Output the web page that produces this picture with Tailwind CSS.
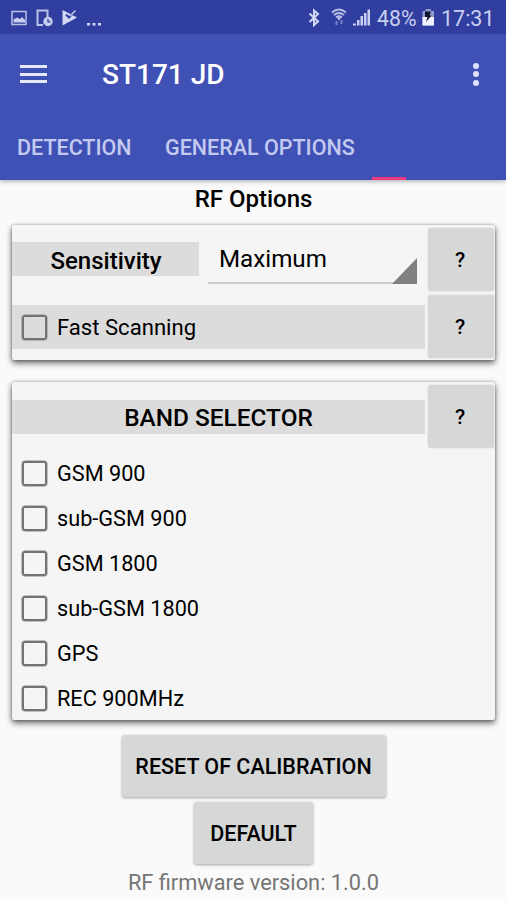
<!DOCTYPE html>
<html lang="en">
<head>
<meta charset="utf-8">
<title>ST171 JD</title>
<script src="https://cdn.jsdelivr.net/npm/@tailwindcss/browser@4"></script>
</head>
<body class="w-[506px] h-[900px] overflow-hidden bg-[#fafafa] font-[Roboto,sans-serif] text-black">
<div class="flex h-[900px] w-[506px] flex-col whitespace-nowrap">
  <div class="relative z-10 flex h-[180px] shrink-0 flex-col bg-[#3f51b5] shadow-[0_1px_5px_rgba(0,0,0,0.35)]">
    <div class="flex h-[34px] items-center bg-[#303f9f] text-[#c9cff0]">
      <svg class="h-[34px] w-[110px]" viewBox="0 0 110 34" fill="none">
        <rect x="12" y="11.500" width="14" height="13" stroke="#b9c0e8" stroke-width="1.500"/>
        <path d="M13.500 22.500v-3l3.500-2 3 1.500 2-2 3 3v2.500z" fill="#c9cff0"/>
        <path d="M43 25h-5.500V10.500h10V17" stroke="#b9c0e8" stroke-width="2"/>
        <circle cx="48" cy="21.500" r="4.700" fill="#c9cff0"/>
        <path d="M48 18.800v3h2.500" stroke="#303f9f" stroke-width="1.300"/>
        <path d="M62.500 10l14.500 7.500L62.500 25.500z" fill="#d3d8f4"/>
        <path d="M66 14.500l3 3 6-6.500" stroke="#303f9f" stroke-width="2"/>
        <path d="M70 16l5.500-5.500" stroke="#d3d8f4" stroke-width="1.300"/>
        <path d="M87 23h3v2.500h-3zM92.500 23h3v2.500h-3zM98 23h3v2.500h-3z" fill="#d3d8f4"/>
      </svg>
      <svg class="ml-[195px] h-[34px] w-[70px]" viewBox="305 0 70 34" fill="none">
        <path d="M309.500 13.500l8.500 8-4 3.500V10.500l4 3.500-8.500 8" stroke="#d3d8f4" stroke-width="2"/>
        <path d="M332 12.500q7-6 14 0M334 15q5-4 10 0M336 17.500q3-2.500 6 0" stroke="#b9c0e8" stroke-width="1.700"/>
        <path d="M337 17.500h4l-2 3z" fill="#d3d8f4"/>
        <path d="M336.500 25v-4M341.500 20v4" stroke="#7884c9" stroke-width="2"/>
        <path d="M353 25.500v-2h3v2zM357 25.500V20h2.500v5.500zM360.500 25.500V16h2.500v9.500zM364 25.500V13h2.500v12.500zM367.500 25.500V9.500h2.500v16z" fill="#c9cff0"/>
      </svg>
      <span class="ml-[2px] w-[40px] pt-[3px] text-[21.300px] leading-none">48%</span>
      <svg class="ml-[4px] h-[34px] w-[14px]" viewBox="421 0 14 34">
        <path d="M422.500 11h3V9h5.500v2h3v14.500h-11.500z" fill="#8f99d4"/>
        <path d="M422.500 17H434v8.500h-11.500z" fill="#f0f2ff"/>
        <path d="M425 11.500h6l-1.500 4h2L426 22l1.500-5H425z" fill="#10152c"/>
      </svg>
      <span class="ml-[6px] pt-[3px] text-[21.500px] leading-none">17:31</span>
    </div>
    <div class="flex h-[80px] items-center">
      <div class="ml-[20px] flex w-[27px] flex-col gap-[4.500px]">
        <div class="h-[3px] bg-[#e4e8fb]"></div>
        <div class="h-[3px] bg-[#e4e8fb]"></div>
        <div class="h-[3px] bg-[#e4e8fb]"></div>
      </div>
      <h1 class="ml-[55px] pt-[1px] text-[28px] font-medium text-white">ST171 JD</h1>
      <div class="mr-[27.500px] ml-auto flex flex-col gap-[2.500px]">
        <div class="size-[6px] rounded-full bg-[#dde2fa]"></div>
        <div class="size-[6px] rounded-full bg-[#dde2fa]"></div>
        <div class="size-[6px] rounded-full bg-[#dde2fa]"></div>
      </div>
    </div>
    <div class="flex h-[66px] text-[21.500px] leading-[68px] font-medium text-[#c3caf0]">
      <span class="ml-[17px] w-[148px]">DETECTION</span>
      <span class="w-[207px]">GENERAL OPTIONS</span>
      <span class="h-[3px] w-[34px] self-end bg-[#f03a80]"></span>
    </div>
  </div>

  <h2 class="h-[45px] shrink-0 pl-[1px] text-center text-[24px] leading-[39px] font-medium">RF Options</h2>

  <section class="mx-[12px] flex h-[135px] w-[483px] shrink-0 flex-col rounded-[2px] bg-[#f5f5f5] shadow-[0_3px_6px_rgba(0,0,0,0.6),0_0_3px_rgba(0,0,0,0.3)]">
    <div class="flex h-[70px] pt-[3px]">
      <div class="mt-[14px] h-[34px] w-[187px] bg-[#dcdcdc] pl-[1px] text-center text-[24px] leading-[39px] font-medium">Sensitivity</div>
      <div class="ml-[9px] flex h-[56px] w-[209px] justify-between border-b-2 border-[#cbcbcb]">
        <span class="ml-[11px] text-[24.200px] leading-[63px]">Maximum</span>
        <svg class="mt-[30px] h-[26px] w-[25px]" viewBox="0 0 25 26"><path d="M25 0v26H0z" fill="#808080"/></svg>
      </div>
      <button class="ml-[11px] h-[63px] w-[66px] rounded-[3px] bg-[#d6d7d7] pt-[2px] pr-[2px] text-[21px] font-medium shadow-[0_0_2px_rgba(0,0,0,0.15)]">?</button>
    </div>
    <div class="flex h-[65px]">
      <label class="mt-[10px] flex h-[44px] w-[413px] items-center bg-[#dcdcdc] text-[22.100px]"><span class="mr-[10px] ml-[10px] size-[25px] rounded-[3px] border-2 border-[#737373] shadow-[0_0_0_0.5px_#8a8a8a]"></span><span class="pt-[2px]">Fast Scanning</span></label>
      <button class="ml-[3px] h-[63px] w-[66px] rounded-[3px] bg-[#d6d7d7] pt-[3px] pr-[2px] text-[21px] font-medium shadow-[0_0_2px_rgba(0,0,0,0.15)]">?</button>
    </div>
  </section>

  <section class="mx-[12px] mt-[22px] flex h-[338px] w-[483px] shrink-0 flex-col rounded-[2px] bg-[#f5f5f5] shadow-[0_3px_6px_rgba(0,0,0,0.6),0_0_3px_rgba(0,0,0,0.3)]">
    <div class="flex h-[68px] shrink-0 pt-[3px]">
      <div class="mt-[15px] h-[34px] w-[413px] bg-[#dcdcdc] text-center text-[24.400px] leading-[36px] font-medium">BAND SELECTOR</div>
      <button class="ml-[3px] h-[63px] w-[66px] rounded-[3px] bg-[#d6d7d7] pt-[3px] pr-[2px] text-[21px] font-medium shadow-[0_0_2px_rgba(0,0,0,0.15)]">?</button>
    </div>
    <div class="flex flex-col pt-px text-[21.700px]">
      <label class="flex h-[45px] items-center"><span class="mr-[10px] ml-[10px] size-[25px] rounded-[3px] border-2 border-[#737373] shadow-[0_0_0_0.5px_#8a8a8a]"></span><span class="pt-[2px]">GSM 900</span></label>
      <label class="flex h-[45px] items-center"><span class="mr-[10px] ml-[10px] size-[25px] rounded-[3px] border-2 border-[#737373] shadow-[0_0_0_0.5px_#8a8a8a]"></span><span class="pt-[2px]">sub-GSM 900</span></label>
      <label class="flex h-[45px] items-center"><span class="mr-[10px] ml-[10px] size-[25px] rounded-[3px] border-2 border-[#737373] shadow-[0_0_0_0.5px_#8a8a8a]"></span><span class="pt-[2px]">GSM 1800</span></label>
      <label class="flex h-[45px] items-center"><span class="mr-[10px] ml-[10px] size-[25px] rounded-[3px] border-2 border-[#737373] shadow-[0_0_0_0.5px_#8a8a8a]"></span><span class="pt-[2px]">sub-GSM 1800</span></label>
      <label class="flex h-[45px] items-center"><span class="mr-[10px] ml-[10px] size-[25px] rounded-[3px] border-2 border-[#737373] shadow-[0_0_0_0.5px_#8a8a8a]"></span><span class="pt-[2px]">GPS</span></label>
      <label class="flex h-[45px] items-center"><span class="mr-[10px] ml-[10px] size-[25px] rounded-[3px] border-2 border-[#737373] shadow-[0_0_0_0.5px_#8a8a8a]"></span><span class="pt-[2px]">REC 900MHz</span></label>
    </div>
  </section>

  <div class="mt-[15px] flex shrink-0 flex-col items-center gap-[5px] pl-[1px]">
    <button class="h-[62px] w-[264px] shrink-0 rounded-[3px] bg-[#d6d7d7] pt-[3px] text-[21.500px] font-medium shadow-[0_1px_3px_rgba(0,0,0,0.35)]">RESET OF CALIBRATION</button>
    <button class="h-[62px] w-[119px] shrink-0 rounded-[3px] bg-[#d6d7d7] pt-[3px] text-[21.500px] font-medium shadow-[0_1px_3px_rgba(0,0,0,0.35)]">DEFAULT</button>
  </div>
  <p class="h-[36px] shrink-0 pl-[1px] text-center text-[21.800px] leading-[38px] text-[#757575]">RF firmware version: 1.0.0</p>
</div>
</body>
</html>
